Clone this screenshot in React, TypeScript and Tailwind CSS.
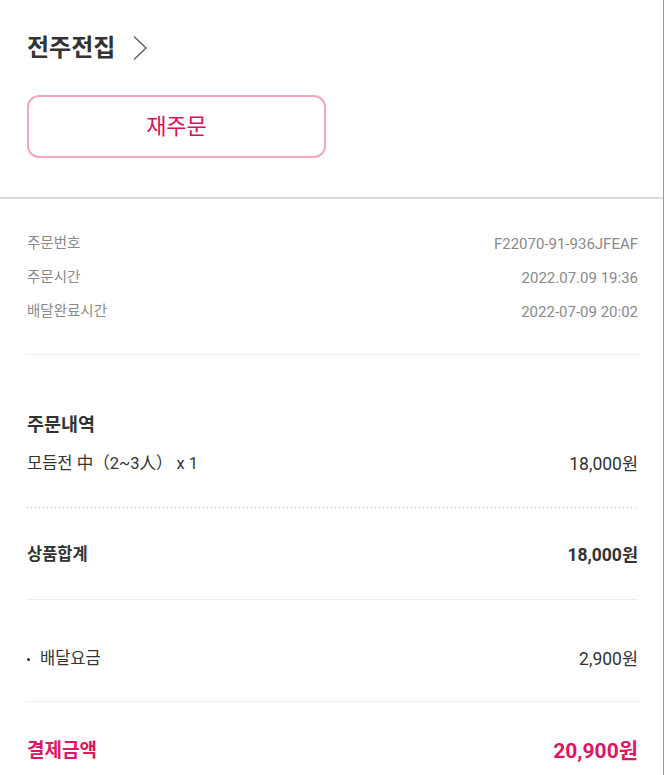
import React from 'react';

const font = { fontFamily: 'Roboto, "Noto Sans CJK KR", sans-serif' };

const InfoRow = ({ label, value }: { label: string; value: string }) => (
    <div className="flex h-[34px] items-center justify-between text-[14px] text-[#8a8a8a]">
        <span className="text-[14.5px]">{label}</span>
        <span className="text-[15px]">{value}</span>
    </div>
);

export default function App() {
    return (
        <div className="w-[664px] min-h-[775px] bg-white border-r border-[#9a9a9a]" style={font}>
            {/* Store header */}
            <section className="px-[27px] pt-[31px] pb-[39px]">
                <div className="flex items-center gap-[17px] h-[34px]">
                    <h1 className="text-[24px] font-bold text-[#333] leading-none">전주전집</h1>
                    <svg width="16" height="26" viewBox="0 0 16 26" fill="none" className="text-[#666]">
                        <path d="M2 1.5 L14 13 L2 24.5" stroke="currentColor" strokeWidth="1.5" />
                    </svg>
                </div>
                <button className="mt-[30px] w-[299px] h-[63px] rounded-[12px] border-2 border-[#f1a6c3] text-[22px] text-[#d3115c]">
                    재주문
                </button>
            </section>

            <div className="h-[2px] bg-[#dcdcdc]" />

            <div className="px-[27px] pr-[25px]">
                {/* Order info */}
                <div className="pt-[28px] pb-[25px] border-b border-[#ececec]">
                    <InfoRow label="주문번호" value="F22070-91-936JFEAF" />
                    <InfoRow label="주문시간" value="2022.07.09 19:36" />
                    <InfoRow label="배달완료시간" value="2022-07-09 20:02" />
                </div>

                {/* Order items */}
                <div className="pt-[57px] pb-[31px]">
                    <h2 className="text-[18.5px] font-bold text-[#333] leading-[26px]">주문내역</h2>
                    <div className="mt-[14px] flex justify-between items-center text-[16.5px] text-[#333] leading-[24px]">
                        <span>모듬전 中（2~3人） x 1</span>
                        <span className="text-[17.5px]">18,000원</span>
                    </div>
                </div>
                <div className="h-px bg-[repeating-linear-gradient(90deg,#c6c6c6_0_1px,transparent_1px_4px)]" />

                <div className="pt-[35px] pb-[32px] border-b border-[#ececec] flex justify-between items-center text-[16.5px] font-bold text-[#333] leading-[24px]">
                    <span>상품합계</span>
                    <span className="text-[17.5px]">18,000원</span>
                </div>

                <div className="pt-[47px] pb-[30px] border-b border-[#ececec] flex justify-between items-center text-[16.5px] text-[#333] leading-[24px]">
                    <span className="flex items-center">
                        <span className="w-[3px] h-[3px] rounded-full bg-[#333] mr-[10px]" />
                        배달요금
                    </span>
                    <span className="text-[17.5px]">2,900원</span>
                </div>

                <div className="pt-[35px] pb-[20px] flex justify-between items-center text-[19px] font-bold text-[#dc1660] leading-[28px]">
                    <span>결제금액</span>
                    <span className="text-[21px]">20,900원</span>
                </div>
            </div>
        </div>
    );
}
